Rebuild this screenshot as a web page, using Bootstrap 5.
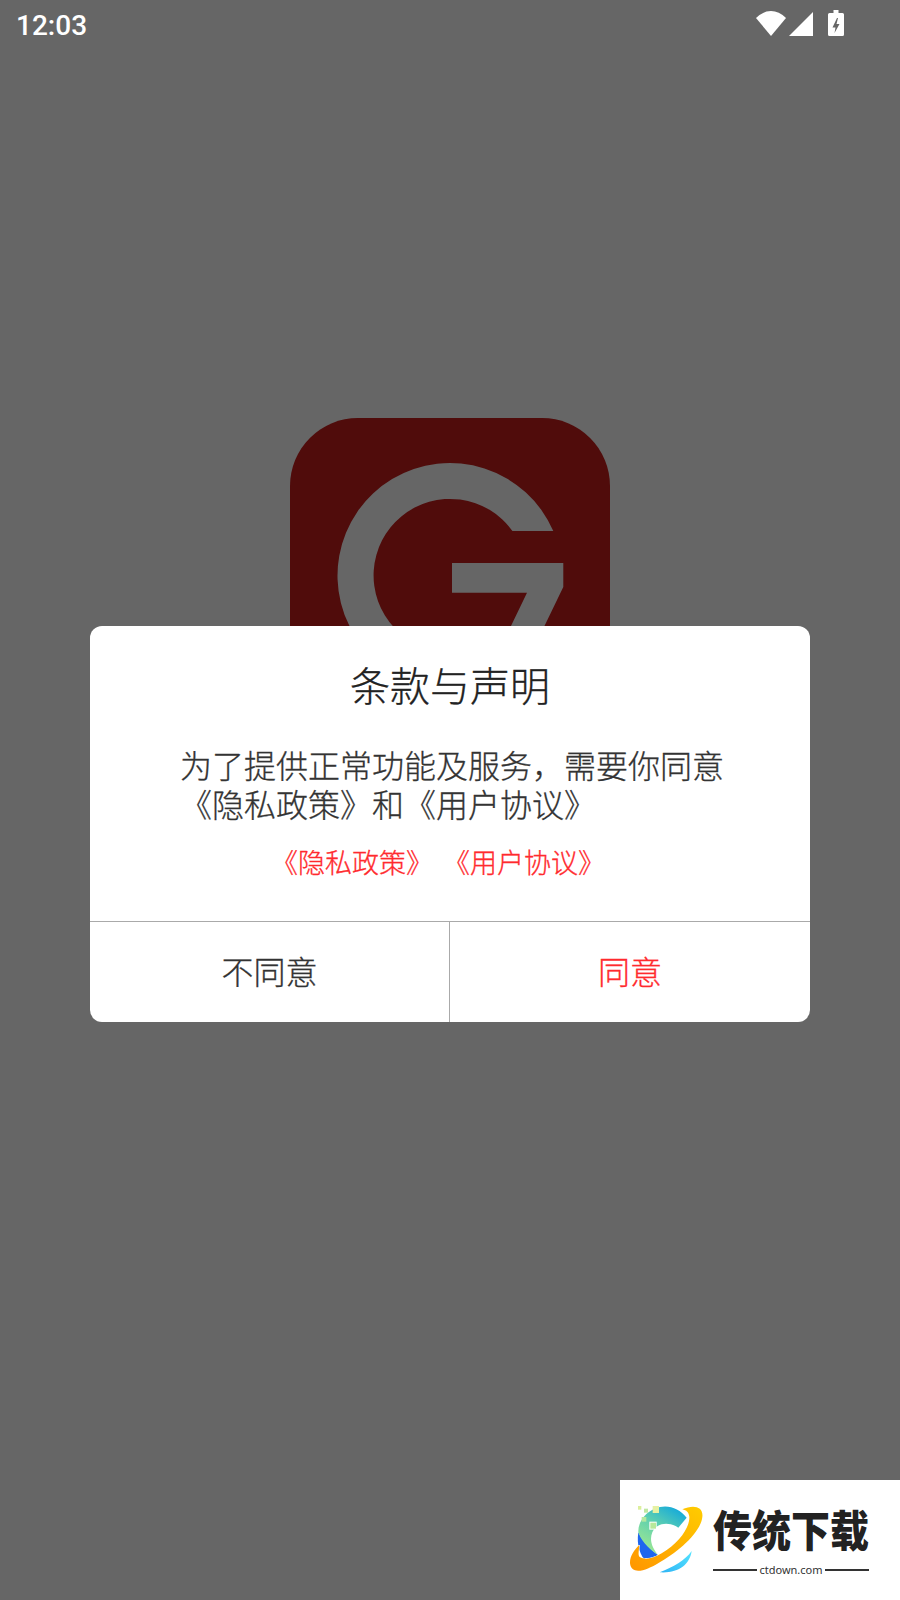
<!DOCTYPE html>
<html lang="zh">
<head>
<meta charset="utf-8">
<title>条款与声明</title>
<link href="https://cdn.jsdelivr.net/npm/bootstrap@5.3.0/dist/css/bootstrap.min.css" rel="stylesheet">
<style>
html, body { margin: 0; background: #666; }
body { font-family: "Noto Sans CJK SC", "Liberation Sans", sans-serif; }
.screen-wrap { width: 900px; height: 1600px; overflow: hidden; background: #666; }
.sbar { height: 50px; padding: 0 56px 0 16px; }
.sbar-time { font-family: Roboto, sans-serif; font-size: 28px; font-weight: 500; color: #fff; line-height: 50px; padding-top: 1px; }
.sbar-icons svg { display: block; }
.app-logo { left: 290px; top: 418px; }
.stage { padding-top: 576px; }
.terms-box { width: 720px; height: 396px; background: #fff; border-radius: 12px; overflow: hidden; z-index: 2; }
.terms-title { font-size: 40px; line-height: 56px; color: #222; font-weight: 300; -webkit-text-stroke: .3px currentColor; margin: 30px 0 0; text-align: center; }
.terms-body { font-size: 32px; line-height: 39px; color: #333; font-weight: 300; -webkit-text-stroke: .3px currentColor; margin: 33px 0 0 90px; width: 560px; }
.terms-links { font-size: 27px; line-height: 36px; color: #ff2a2e; font-weight: 300; -webkit-text-stroke: .3px currentColor; margin: 21px 24px 0 0; gap: 10px; }
.terms-links a { color: inherit; text-decoration: none; }
.terms-actions { height: 101px; border-top: 1.5px solid #aaa; }
.terms-btn { flex: 0 0 50%; font-size: 32px; line-height: 1; font-weight: 300; -webkit-text-stroke: .3px currentColor; color: #333; padding: 0 0 5px; background: none; border: 0; border-radius: 0; }
.terms-btn:first-child { border-right: 1px solid #aaa; }
.terms-btn-ok { color: #ff2a2e; }
.mark-box { right: 0; bottom: 0; width: 280px; height: 120px; background: #fff; z-index: 3; }
.mark-art { left: 5px; top: 15px; }
.mark-copy { left: 93px; top: 23px; width: 156px; }
.mark-name { font-size: 39px; font-weight: 900; color: #222; line-height: 48px; white-space: nowrap; transform: scaleY(1.12); transform-origin: 50% 30%; }
.mark-url { font-family: "Noto Sans", sans-serif; font-size: 11px; line-height: 16px; color: #333; gap: 2px; margin-top: 11px; }
.mark-url i { flex: 1 1 0; height: 2px; background: #333; }
</style>
</head>
<body>
<div class="screen-wrap position-relative d-flex flex-column">
  <svg class="app-logo position-absolute" width="320" height="320" viewBox="290 418 320 320" aria-hidden="true">
    <rect x="290" y="418" width="320" height="320" rx="68" fill="#500c0b"/>
    <path fill="#666" d="M553.3 531 A112.500 112.500 0 1 0 531.300 653.300 L563.3 587 V563 H452 V592.7 H527 L510 628 L506 627.600 A76.500 76.500 0 1 1 512.400 531 Z"/>
  </svg>

  <div class="sbar d-flex justify-content-between align-items-center position-relative">
    <span class="sbar-time">12:03</span>
    <div class="sbar-icons d-flex align-items-center">
      <svg width="88" height="50" viewBox="756 0 88 50" aria-hidden="true">
        <path fill="#fff" d="M771 36 L756 18 Q763 11 771 11 Q779 11 786 18 Z"/>
        <path fill="#fff" d="M789 36 L813 12 V36 Z"/>
        <path fill="#fff" d="M833.500 10 H838.500 V13 H842.500 Q844 13 844 14.500 V34.500 Q844 36 842.500 36 H829.500 Q828 36 828 34.500 V14.500 Q828 13 829.500 13 H833.500 Z"/>
        <path fill="#666" d="M837 18 L832.500 27.500 H835.500 L834.500 33 L839.500 24 H836.500 L838 18 Z"/>
      </svg>
    </div>
  </div>

  <main class="stage flex-grow-1 d-flex justify-content-center align-items-start">
    <section class="terms-box position-relative d-flex flex-column">
      <h1 class="terms-title">条款与声明</h1>
      <p class="terms-body">为了提供正常功能及服务，需要你同意《隐私政策》和《用户协议》</p>
      <div class="terms-links d-flex justify-content-center">
        <a href="#">《隐私政策》</a><a href="#">《用户协议》</a>
      </div>
      <div class="terms-actions mt-auto d-flex">
        <button type="button" class="btn terms-btn">不同意</button>
        <button type="button" class="btn terms-btn terms-btn-ok">同意</button>
      </div>
    </section>
  </main>

  <aside class="mark-box position-absolute">
    <svg class="mark-art position-absolute" width="90" height="90" viewBox="0 0 270 270" aria-hidden="true">
      <defs>
        <linearGradient id="ringG" x1="0" y1="1" x2="1" y2="0"><stop offset="0" stop-color="#ff9500"/><stop offset="1" stop-color="#ffcc00"/></linearGradient>
        <linearGradient id="moonG" x1="0" y1="1" x2="1" y2="0"><stop offset="0" stop-color="#2fb4f5"/><stop offset="1" stop-color="#55e4ff"/></linearGradient>
        <linearGradient id="arcG" x1="0.8" y1="0" x2="0.2" y2="1"><stop offset="0" stop-color="#12a8dc"/><stop offset=".45" stop-color="#5fd0b0"/><stop offset="1" stop-color="#a4ea8e"/></linearGradient>
      </defs>
      <path fill="#1f66ee" d="M40 112 C34 150 45 182 66 204 L106 186 C84 170 60 150 40 112 Z"/>
      <path fill="url(#arcG)" d="M185 68 C165 42 135 30 105 36 C65 44 38 80 40 112 C46 132 66 160 100 180 C82 160 72 135 82 112 C94 84 130 78 160 98 Z"/>
      <path fill="url(#ringG)" stroke="#fff" stroke-width="3" paint-order="stroke" d="M172 43 C205 28 236 34 232 66 C227 112 160 172 97 206 C70 222 20 245 15 205 C14 183 28 165 43 150 C42 168 38 180 44 186 C62 196 85 190 110 175 C165 142 195 95 193 65 C191 52 185 46 172 43 Z"/>
      <path fill="url(#moonG)" d="M104 232 C145 216 180 196 200 168 C195 208 160 236 104 232 Z"/>
      <rect x="39" y="33" width="10" height="11" fill="#dcef9c"/>
      <rect x="57" y="41" width="12" height="12" fill="#bfe8a2"/>
      <rect x="83" y="33" width="19" height="21" fill="#e6f1a3"/>
      <rect x="50" y="66" width="14" height="14" fill="#b4e8a0"/>
      <rect x="73" y="80" width="22" height="24" fill="#fff"/>
      <rect x="76" y="83" width="17" height="18" fill="#b8e89a"/>
    </svg>
    <div class="mark-copy position-absolute">
      <div class="mark-name">传统下载</div>
      <div class="mark-url d-flex align-items-center"><i></i><span>ctdown.com</span><i></i></div>
    </div>
  </aside>
</div>
<script src="https://cdn.jsdelivr.net/npm/bootstrap@5.3.0/dist/js/bootstrap.bundle.min.js"></script>
</body>
</html>
